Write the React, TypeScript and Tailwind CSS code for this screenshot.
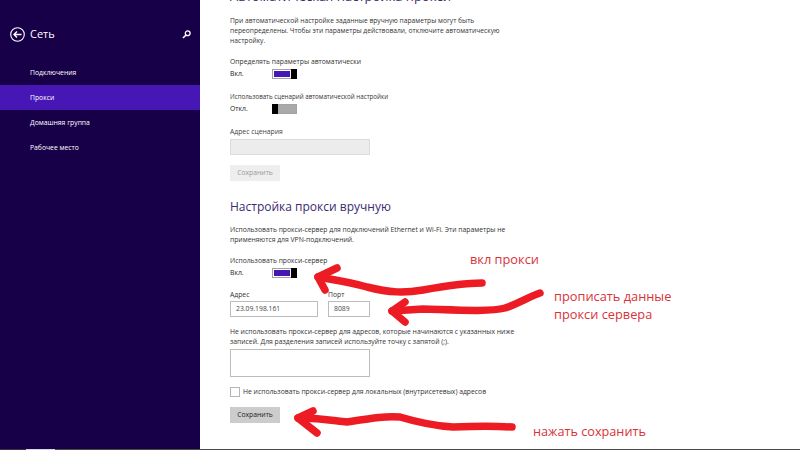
const navItems = ["Подключения", "Прокси", "Домашняя группа", "Рабочее место"];

function Toggle({ on }: { on: boolean }) {
  return (
    <div className="flex h-[10px] w-[25px] border border-[#a3a3a3] bg-white relative">
      {on ? (
        <>
          <div className="flex-1 m-px bg-[#4617b4]" />
          <div className="w-[6px] -my-px -mr-px bg-black" />
        </>
      ) : (
        <>
          <div className="w-[6px] -my-px -ml-px bg-black" />
          <div className="flex-1 bg-[#a9a9a9]" />
        </>
      )}
    </div>
  );
}

function ToggleRow({ label, state, on, className, labelClass = "" }: { label: string; state: string; on: boolean; className: string; labelClass?: string }) {
  return (
    <div className={className}>
      <div className={`h-[10px] leading-[10px] text-[#333] ${labelClass}`}>{label}</div>
      <div className="flex items-center h-[10px] mt-[2px]">
        <span className="w-[42px] leading-[10px] text-[#222]">{state}</span>
        <Toggle on={on} />
      </div>
    </div>
  );
}

function Annotations() {
  const red = "#ed1c24";
  return (
    <>
      <svg className="absolute left-0 top-0 pointer-events-none" width="800" height="450" viewBox="0 0 800 450" fill="none" stroke={red} strokeWidth="7.5" strokeLinecap="round" strokeLinejoin="round">
        <path d="M482 283 C465 283 450 285 423 290 C405 293 390 293 367 287 C350 282 335 280 318 277" />
        <path d="M337 268 L318 277 L325 290" />
        <path d="M540 293 C530 296 520 303 505 308 C490 312 457 310 423 309 L392 311" />
        <path d="M405 302 L392 311 L405 322" />
        <path d="M512 427 C495 426 480 426 453 427 C435 426 420 423 400 417 C385 416 373 418 347 422 C335 421 325 418 298 418" />
        <path d="M313 411 L298 418 L317 433" />
      </svg>
      <div className="absolute left-[470px] top-[250px] text-[12.8px] leading-[18px] text-[#d8333a]">вкл прокси</div>
      <div className="absolute left-[554px] top-[287px] text-[12.8px] leading-[18px] text-[#d8333a]">
        <div>прописать данные</div>
        <div>прокси сервера</div>
      </div>
      <div className="absolute left-[533px] top-[422px] text-[12.7px] leading-[18px] text-[#d8333a]">нажать сохранить</div>
    </>
  );
}

export default function App() {
  return (
    <div className="relative flex flex-col w-[800px] h-[450px] overflow-hidden bg-white font-['Open_Sans',sans-serif] text-[6.8px]">
      <div className="flex flex-1 min-h-0">
        <aside className="w-[200px] shrink-0 bg-[#180048] text-white">
          <div className="flex items-center h-[24px] mt-[22px] pl-[10px] pr-[9px]">
            <svg width="15" height="15" viewBox="0 0 15 15" fill="none" stroke="white" strokeWidth="1.1">
              <circle cx="7.5" cy="7.5" r="6.8" />
              <path d="M11.5 7.5H4M7 4.5L4 7.5L7 10.5" strokeWidth="1.4" />
            </svg>
            <span className="ml-[5px] text-[11px] leading-[24px] flex-1">Сеть</span>
            <svg width="9" height="9" viewBox="0 0 9 9" fill="none" stroke="white" strokeWidth="1.3">
              <circle cx="5.7" cy="3.3" r="2.4" />
              <path d="M4 5L1 8" strokeWidth="1.6" />
            </svg>
          </div>
          <nav className="mt-[14px]">
            {navItems.map((item, i) => (
              <div key={item} className={`h-[25px] pl-[30px] leading-[25px] ${i === 1 ? "bg-[#4617b4]" : ""}`}>
                {item}
              </div>
            ))}
          </nav>
        </aside>
        <main className="flex-1 pl-[30px] text-[#333] leading-[10px]">
          <div className="-mt-[14px] h-[20px] text-[13px] leading-[20px] text-[#3d2a70] whitespace-nowrap">Автоматическая настройка прокси</div>
          <p className="mt-[10px] w-[282px] leading-[10.2px] text-[#333] text-[6.7px]">
            При автоматической настройке заданные вручную параметры могут быть переопределены. Чтобы эти параметры действовали, отключите автоматическую настройку.
          </p>
          <ToggleRow className="mt-[10px]" label="Определять параметры автоматически" state="Вкл." on />
          <ToggleRow className="mt-[13px]" labelClass="text-[6.2px]" label="Использовать сценарий автоматической настройки" state="Откл." on={false} />
          <div className="mt-[13px] h-[10px] text-[#444]">Адрес сценария</div>
          <div className="mt-[2px] w-[140px] h-[16px] bg-[#ececec] border border-[#dcdcdc]" />
          <div className="mt-[10px] flex items-center justify-center w-[50px] h-[16px] bg-[#eeeeee] text-[#9a9a9a]">Сохранить</div>
          <h2 className="mt-[16px] h-[20px] text-[12px] leading-[20px] font-normal text-[#3d2a70]">Настройка прокси вручную</h2>
          <p className="mt-[8px] w-[282px] leading-[10.2px] text-[#333]">
            Использовать прокси-сервер для подключений Ethernet и Wi-Fi. Эти параметры не применяются для VPN-подключений.
          </p>
          <ToggleRow className="mt-[11px]" label="Использовать прокси-сервер" state="Вкл." on />
          <div className="flex gap-[10px] mt-[12px]">
            <div className="w-[88px]">
              <div className="h-[10px] text-[#333]">Адрес</div>
              <div className="flex items-center h-[16px] mt-px px-[5px] border border-[#bcbcbc] text-[#444]">23.09.198.161</div>
            </div>
            <div className="w-[42px]">
              <div className="h-[10px] text-[#333]">Порт</div>
              <div className="flex items-center h-[16px] mt-px px-[5px] border border-[#bcbcbc] text-[#444]">8089</div>
            </div>
          </div>
          <p className="mt-[10px] w-[288px] leading-[10.2px] text-[#333]">
            Не использовать прокси-сервер для адресов, которые начинаются с указанных ниже записей. Для разделения записей используйте точку с запятой (;).
          </p>
          <div className="mt-[2px] w-[140px] h-[28px] border border-[#bcbcbc] bg-white" />
          <div className="flex items-center mt-[10px] h-[10px]">
            <div className="w-[10px] h-[10px] border border-[#b5b5b5]" />
            <span className="ml-[3px] whitespace-nowrap">Не использовать прокси-сервер для локальных (внутрисетевых) адресов</span>
          </div>
          <div className="mt-[10px] flex items-center justify-center w-[50px] h-[16px] bg-[#cccccc] text-[#222]">Сохранить</div>
        </main>
      </div>
      <div className="flex h-px shrink-0 bg-[#4a4a4a]">
        <div className="w-[26px] bg-[#3a3048]" />
        <div className="w-[29px] bg-[#d8d4e8]" />
      </div>
      <Annotations />
    </div>
  );
}
